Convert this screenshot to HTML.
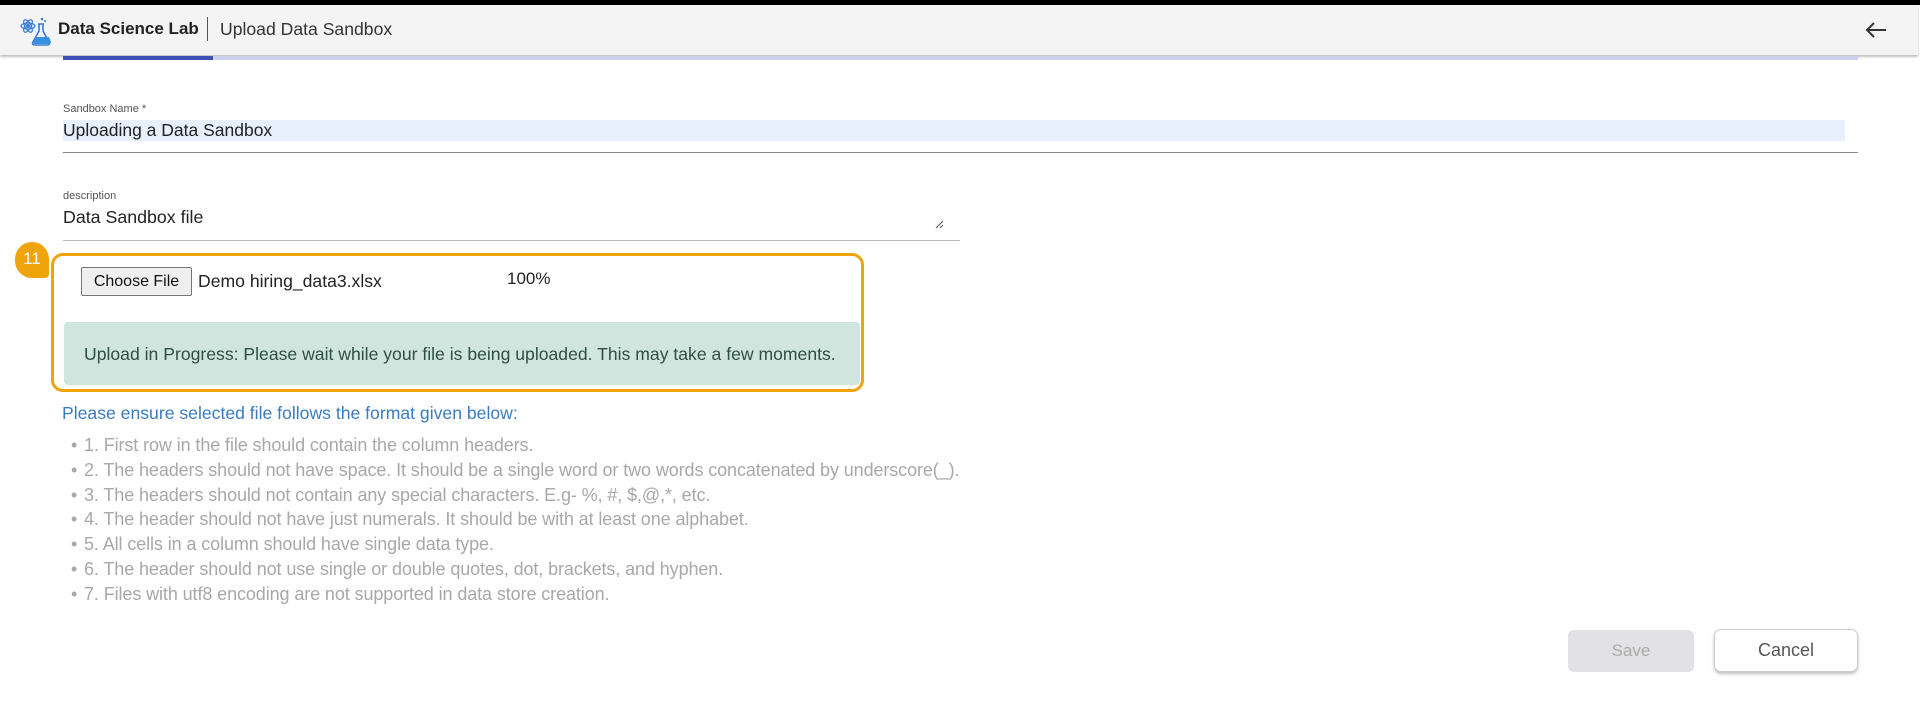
<!DOCTYPE html>
<html><head><meta charset="utf-8"><style>
*{margin:0;padding:0;box-sizing:border-box}
body{width:1920px;height:719px;background:#fff;font-family:"Liberation Sans",sans-serif;position:relative;overflow:hidden;color:#333}
.a{position:absolute;white-space:nowrap}
.l div{position:relative;padding-left:8px}
.l div:before{content:"•";position:absolute;left:-5px;font-size:18px}
</style></head><body>
<div class="a" style="left:0;top:0;width:1920px;height:5px;background:#000"></div>
<div class="a" style="left:0;top:5px;width:1918px;height:50px;background:#f4f4f5;box-shadow:0 2px 2px rgba(0,0,0,.25)"></div>
<svg class="a" style="left:20px;top:16px" width="32" height="30" viewBox="0 0 32 30">
<circle cx="8" cy="10" r="2" fill="#3a7bd5"/><ellipse cx="8" cy="10" rx="7" ry="3" fill="none" stroke="#3a7bd5" stroke-width="1.2"/><ellipse cx="8" cy="10" rx="7" ry="3" transform="rotate(60 8 10)" fill="none" stroke="#3a7bd5" stroke-width="1.2"/><ellipse cx="8" cy="10" rx="7" ry="3" transform="rotate(-60 8 10)" fill="none" stroke="#3a7bd5" stroke-width="1.2"/>
<path d="M18 8h6M19 8v7l-6 11c-1 2 0 3 2 3h12c2 0 3-1 2-3l-6-11V8" fill="none" stroke="#3a7bd5" stroke-width="1.6"/><path d="M15 21h14l2 5c0 1-1 2-2 2H15c-1 0-2-1-1-2z" fill="#3a90e0"/><circle cx="22" cy="3" r="1.3" fill="#3a7bd5"/><circle cx="25" cy="5" r="1" fill="#3a7bd5"/></svg>
<div class="a" style="left:58px;top:19px;font-size:17px;font-weight:bold;color:#222">Data Science Lab</div>
<div class="a" style="left:207px;top:17px;width:1px;height:24px;background:#555"></div>
<div class="a" style="left:220px;top:19px;font-size:17.6px;color:#333">Upload Data Sandbox</div>
<svg class="a" style="left:1864px;top:20px" width="24" height="20" viewBox="0 0 24 20"><path d="M22 10H3M10 3L3 10l7 7" fill="none" stroke="#333" stroke-width="2"/></svg>
<div class="a" style="left:63px;top:56px;width:1795px;height:4px;background:#cdd2ea"></div>
<div class="a" style="left:63px;top:56px;width:150px;height:4px;background:#3f51b5"></div>

<div class="a" style="left:63px;top:103px;font-size:11px;color:#555">Sandbox Name *</div>
<div class="a" style="left:63px;top:120px;width:1782px;height:21px;background:#e8f0fe"></div>
<div class="a" style="left:63px;top:120px;font-size:17.5px;color:#222">Uploading a Data Sandbox</div>
<div class="a" style="left:63px;top:152px;width:1795px;height:1px;background:#888"></div>

<div class="a" style="left:63px;top:190px;font-size:11px;color:#555">description</div>
<div class="a" style="left:63px;top:207px;font-size:17.8px;color:#222">Data Sandbox file</div>
<svg class="a" style="left:934px;top:219px" width="10" height="10"><path d="M9 2L2 9M9 6L6 9" stroke="#555" stroke-width="1"/></svg>
<div class="a" style="left:63px;top:240px;width:897px;height:1px;background:#bbb"></div>

<div class="a" style="left:51px;top:253px;width:813px;height:139px;border:3px solid #f0a30a;border-radius:12px"></div>
<div class="a" style="left:15px;top:242px;width:34px;height:36px;background:#f0a30a;border-radius:17px 17px 4px 17px"></div>
<div class="a" style="left:15px;top:249px;width:34px;text-align:center;color:#fff;font-size:17px">11</div>
<div class="a" style="left:81px;top:267px;width:111px;height:29px;background:#efefef;border:1px solid #767676;border-radius:2px;font-size:16px;line-height:27px;text-align:center;color:#111">Choose File</div>
<div class="a" style="left:198px;top:271px;font-size:17.6px;color:#222">Demo hiring_data3.xlsx</div>
<div class="a" style="left:507px;top:269px;font-size:17px;color:#222">100%</div>
<div class="a" style="left:64px;top:322px;width:796px;height:63px;background:#cfe5dd;border-radius:4px"></div>
<div class="a" style="left:84px;top:344px;font-size:17.6px;color:#2f4f45">Upload in Progress: Please wait while your file is being uploaded. This may take a few moments.</div>

<div class="a" style="left:62px;top:403px;font-size:17.6px;color:#3a7bbf">Please ensure selected file follows the format given below:</div>
<div class="a l" style="left:76px;top:433px;font-size:18px;color:#a8a8a8;line-height:24.8px;letter-spacing:-0.1px">
<div>1. First row in the file should contain the column headers.</div>
<div>2. The headers should not have space. It should be a single word or two words concatenated by underscore(_).</div>
<div>3. The headers should not contain any special characters. E.g- %, #, $,@,*, etc.</div>
<div>4. The header should not have just numerals. It should be with at least one alphabet.</div>
<div>5. All cells in a column should have single data type.</div>
<div>6. The header should not use single or double quotes, dot, brackets, and hyphen.</div>
<div>7. Files with utf8 encoding are not supported in data store creation.</div>
</div>
<div class="a" style="left:1568px;top:630px;width:126px;height:42px;background:#e2e2e4;border-radius:6px;font-size:17px;line-height:42px;text-align:center;color:#aaa">Save</div>
<div class="a" style="left:1714px;top:629px;width:144px;height:43px;background:#fff;border:1px solid #ccc;border-radius:7px;box-shadow:0 2px 3px rgba(0,0,0,.25);font-size:18px;line-height:41px;text-align:center;color:#555">Cancel</div>
</body></html>
